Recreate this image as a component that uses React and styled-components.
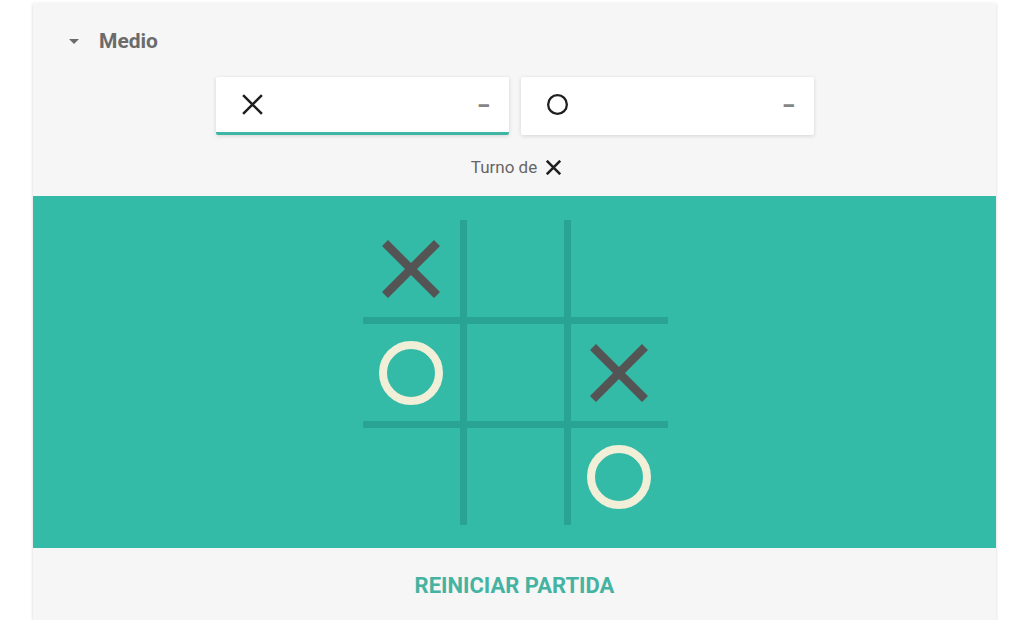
import React from 'react';
import styled, { createGlobalStyle } from 'styled-components';

const teal = '#34bba7';
const tealDark = '#29a393';

const board = [
  ['x', '', ''],
  ['o', '', 'x'],
  ['', '', 'o'],
];

function XMark({ size, stroke, color }) {
  return (
    <svg width={size} height={size} viewBox="0 0 58 58">
      <path d="M3 3 L55 55 M55 3 L3 55" stroke={color} strokeWidth={stroke} fill="none" />
    </svg>
  );
}

function OMark({ size, stroke, color }) {
  return (
    <svg width={size} height={size} viewBox="0 0 64 64">
      <circle cx="32" cy="32" r={32 - stroke / 2} stroke={color} strokeWidth={stroke} fill="none" />
    </svg>
  );
}

export default function App() {
  return (
    <>
      <GlobalStyle />
      <Card>
        <Header>
          <Caret />
          <Level>Medio</Level>
        </Header>
        <Players>
          <PlayerBox active>
            <XMark size={21} stroke={7} color="#1f1f1f" />
            <Score>–</Score>
          </PlayerBox>
          <PlayerBox>
            <OMark size={21} stroke={7} color="#1f1f1f" />
            <Score>–</Score>
          </PlayerBox>
        </Players>
        <Turn>
          Turno de
          <XMark size={15} stroke={10} color="#1f1f1f" />
        </Turn>
        <Field>
          <Board>
            {board.flat().map((c, i) => (
              <Cell key={i}>
                {c === 'x' && <XMark size={58} stroke={8.5} color="#545454" />}
                {c === 'o' && <OMark size={64} stroke={8} color="#f1efd7" />}
              </Cell>
            ))}
          </Board>
        </Field>
        <Footer>
          <ResetButton>REINICIAR PARTIDA</ResetButton>
        </Footer>
      </Card>
    </>
  );
}

const GlobalStyle = createGlobalStyle`
  body {
    margin: 0;
    background: #ffffff;
    font-family: Roboto, "Liberation Sans", Arial, sans-serif;
  }
`;

const Card = styled.div`
  margin: 3px 0 0 33px;
  width: 963px;
  background: #f6f6f6;
  box-shadow: 0 1px 3px rgba(0, 0, 0, 0.18);
  display: flex;
  flex-direction: column;
`;

const Header = styled.div`
  height: 74px;
  box-sizing: border-box;
  padding: 27px 0 0 36px;
  display: flex;
  align-items: flex-start;
  gap: 20px;
`;

const Caret = styled.span`
  margin-top: 9px;
  width: 0;
  height: 0;
  border-left: 5px solid transparent;
  border-right: 5px solid transparent;
  border-top: 5px solid #6b6b6b;
`;

const Level = styled.span`
  font-size: 21px;
  line-height: 22px;
  font-weight: 700;
  color: #6b6b6b;
`;

const Players = styled.div`
  display: flex;
  justify-content: center;
  gap: 12px;
  height: 58px;
`;

const PlayerBox = styled.div`
  width: 293px;
  height: 58px;
  box-sizing: border-box;
  background: #ffffff;
  padding: 0 19px 0 26px;
  display: flex;
  align-items: center;
  justify-content: space-between;
  border-bottom: 3px solid ${(p) => (p.active ? '#3eb6a3' : '#ffffff')};
  border-radius: 2px;
  box-shadow: 0 1px 4px rgba(0, 0, 0, 0.14);
`;

const Score = styled.span`
  font-size: 20px;
  font-weight: 900;
  color: #858585;
  padding-top: 3px;
`;

const Turn = styled.div`
  height: 61px;
  box-sizing: border-box;
  padding: 3px 0 0 3px;
  display: flex;
  align-items: center;
  justify-content: center;
  gap: 9px;
  font-size: 17px;
  color: #666666;
`;

const Field = styled.div`
  height: 352px;
  box-sizing: border-box;
  background: ${teal};
  padding-top: 24px;
  display: flex;
  justify-content: center;
`;

const Board = styled.div`
  display: grid;
  grid-template-columns: repeat(3, 97px);
  grid-template-rows: repeat(3, 97px);
  gap: 7px;
  background: ${tealDark};
  height: 305px;
  margin-left: 1px;
`;

const Cell = styled.div`
  background: ${teal};
  display: flex;
  align-items: center;
  justify-content: center;
`;

const Footer = styled.div`
  height: 72px;
  display: flex;
  align-items: center;
  justify-content: center;
`;

const ResetButton = styled.button`
  border: none;
  background: transparent;
  font-family: Roboto, "Liberation Sans", Arial, sans-serif;
  font-size: 22px;
  font-weight: 700;
  color: #45b3a1;
  padding: 0;
  margin-top: 2px;
  cursor: pointer;
`;
